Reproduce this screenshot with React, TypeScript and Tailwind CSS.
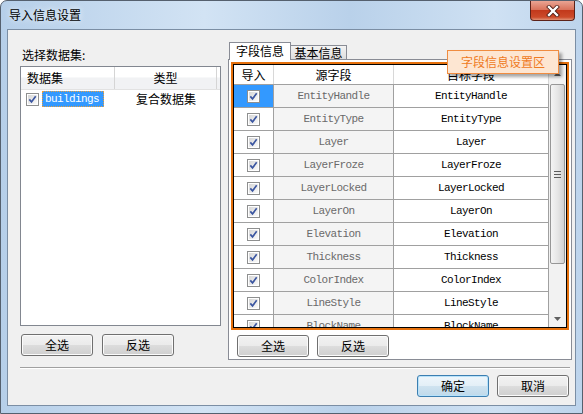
import React from 'react';

const cjk = "font-['Noto_Sans_CJK_SC','Microsoft_YaHei',sans-serif]";
const mono = "font-['Liberation_Mono','Noto_Sans_CJK_SC',monospace] text-[11px] tracking-[-0.6px]";

const fields = [
  'EntityHandle',
  'EntityType',
  'Layer',
  'LayerFroze',
  'LayerLocked',
  'LayerOn',
  'Elevation',
  'Thickness',
  'ColorIndex',
  'LineStyle',
  'BlockName',
];

const CheckBox: React.FC = () => (
  <svg width="13" height="13" viewBox="0 0 13 13" className="shrink-0">
    <defs>
      <linearGradient id="cbfill" x1="0" y1="0" x2="1" y2="1">
        <stop offset="0" stopColor="#d6d6d6" />
        <stop offset="1" stopColor="#fbfbfb" />
      </linearGradient>
    </defs>
    <rect x="0.5" y="0.5" width="12" height="12" fill="#ffffff" stroke="#8e8f8f" />
    <rect x="2" y="2" width="9" height="9" fill="url(#cbfill)" />
    <path d="M3.3 6.4 L5.5 8.9 L9.7 3.3" fill="none" stroke="#3b56a1" strokeWidth="1.7" />
  </svg>
);

const Btn: React.FC<{ label: string; primary?: boolean }> = ({ label, primary }) => (
  <div
    className={`w-[72px] h-[22px] rounded-[3px] border flex items-center justify-center text-[12px] text-black ${cjk} ${
      primary
        ? 'border-[#3c7fb1] shadow-[inset_0_0_0_1px_#b8e2fa] bg-[linear-gradient(#eef6fb_0%,#e3eff7_50%,#cfe3f0_50%,#bfd9ea_100%)]'
        : 'border-[#707070] shadow-[inset_0_0_0_1px_#fbfbfb] bg-[linear-gradient(#f2f2f2_0%,#ebebeb_50%,#dddddd_50%,#cfcfcf_100%)]'
    }`}
  >
    {label}
  </div>
);

const App: React.FC = () => {
  return (
    <div className={`relative w-[583px] h-[414px] rounded-t-[7px] border border-[#55606e] bg-[linear-gradient(90deg,#b6cfe9_0%,#d2e3f4_35%,#b9d1ea_60%,#cfe1f3_85%,#bdd4ec_100%)] flex flex-col ${cjk}`}>
      {/* title bar */}
      <div className="h-[28px] flex items-start">
        <div className="pl-[8px] h-[28px] leading-[28px] text-[12px] text-black [text-shadow:0_0_6px_#ffffff]">导入信息设置</div>
        <div className="ml-auto mr-[7px] w-[45px] h-[20px] rounded-b-[4px] border border-t-0 border-[#5c2219] bg-[linear-gradient(#e9a493_0%,#d9735c_45%,#c2391c_50%,#cc4a2a_85%,#e09276_100%)] flex items-center justify-center">
          <svg width="14" height="12" viewBox="0 0 14 12">
            <path d="M3 2 L11 10 M11 2 L3 10" stroke="#4a1a12" strokeWidth="4" strokeLinecap="square" />
            <path d="M3 2 L11 10 M11 2 L3 10" stroke="#ffffff" strokeWidth="2.4" strokeLinecap="square" />
          </svg>
        </div>
      </div>

      {/* client area */}
      <div className="mx-[6px] h-[377px] border border-[#7b8ea4] bg-[#f0f0f0] pt-[12px] pl-[12px] pr-[3px] flex flex-col">
        <div className="h-[318px] flex gap-[7px]">
          {/* left column */}
          <div className="w-[201px] flex flex-col">
            <div className="mt-[4px] h-[18px] leading-[18px] text-[12px] text-black pl-[2px]">选择数据集:</div>
            <div className="mt-[2px] h-[260px] border border-[#828790] bg-white flex flex-col">
              <div className="h-[23px] flex border-b border-[#e2e2e2] bg-[linear-gradient(#ffffff_0%,#ffffff_45%,#f1f2f4_50%,#f1f2f4_100%)] text-[12px] text-black">
                <div className="w-[94px] border-r border-[#d5d5d5] pl-[6px] leading-[22px]">数据集</div>
                <div className="w-[102px] border-r border-[#d5d5d5] text-center leading-[22px]">类型</div>
                <div className="flex-1" />
              </div>
              <div className="mt-[1px] h-[16px] flex items-center text-[12px]">
                <div className="w-[94px] flex items-center pl-[5px]">
                  <CheckBox />
                  <div className={`ml-[3px] w-[62px] h-[16px] bg-[#3399ff] border border-dotted border-[#e8a040] text-white leading-[14px] pl-[2px] ${mono}`}>
                    buildings
                  </div>
                </div>
                <div className="w-[102px] text-center text-black">复合数据集</div>
              </div>
            </div>
            <div className="mt-[8px] ml-[1px] flex gap-[9px]">
              <Btn label="全选" />
              <Btn label="反选" />
            </div>
          </div>

          {/* right column */}
          <div className="w-[344px] flex flex-col">
            <div className="relative z-10 h-[18px] flex items-start text-[12px] text-black">
              <div className="ml-[1px] w-[62px] h-[18px] border border-b-0 border-[#898c95] bg-white text-center leading-[16px]">字段信息</div>
              <div className="mt-[3px] w-[56px] h-[14px] border border-l-0 border-b-0 border-[#898c95] bg-[linear-gradient(#f3f3f3,#dedede)] text-center leading-[14px]">基本信息</div>
            </div>
            <div className="-mt-[1px] h-[301px] border border-[#898c95] bg-white flex flex-col">
              <div className="ml-[2px] mt-[2px] w-[338px] h-[268px] border-2 border-[#e5700c]">
                <div className="w-full h-full border border-black flex">
                  {/* grid */}
                  <div className="w-[315px] flex flex-col overflow-hidden">
                    <div className="h-[20px] shrink-0 flex border-b border-[#a0a0a0] bg-white text-[12px] text-black">
                      <div className="w-[40px] border-r border-[#d8d8d8] text-center leading-[19px]">导入</div>
                      <div className="w-[120px] border-r border-[#d8d8d8] text-center leading-[19px]">源字段</div>
                      <div className="w-[155px] border-r border-[#d8d8d8] text-center leading-[19px]">目标字段</div>
                    </div>
                    {fields.map((f, i) => (
                      <div key={f} className="h-[23px] shrink-0 flex border-b border-[#a0a0a0]">
                        <div className={`w-[40px] border-r border-[#a0a0a0] flex items-center justify-center ${i === 0 ? 'bg-[#3399ff]' : 'bg-white'}`}>
                          <CheckBox />
                        </div>
                        <div className={`w-[120px] border-r border-[#a0a0a0] bg-[#f4f4f4] text-[#6a6a6a] flex items-center justify-center ${mono}`}>
                          {f}
                        </div>
                        <div className={`w-[155px] border-r border-[#a0a0a0] bg-white text-black flex items-center justify-center ${mono}`}>
                          {f}
                        </div>
                      </div>
                    ))}
                  </div>
                  {/* scrollbar */}
                  <div className="w-[17px] bg-[#f2f2f2] flex flex-col items-center">
                    <div className="h-[17px] flex items-center justify-center">
                      <svg width="7" height="4" viewBox="0 0 7 4">
                        <path d="M0 4 L3.5 0 L7 4 Z" fill="#606060" />
                      </svg>
                    </div>
                    <div className="mt-[2px] w-[15px] h-[180px] rounded-[2px] border border-[#979797] bg-[linear-gradient(90deg,#f4f4f4,#e6e6e6_50%,#d2d2d2)] flex flex-col items-center justify-center gap-[2px]">
                      <div className="w-[7px] h-[1px] bg-[#5c5c5c]" />
                      <div className="w-[7px] h-[1px] bg-[#5c5c5c]" />
                      <div className="w-[7px] h-[1px] bg-[#5c5c5c]" />
                    </div>
                    <div className="flex-1" />
                    <div className="h-[17px] flex items-center justify-center">
                      <svg width="7" height="4" viewBox="0 0 7 4">
                        <path d="M0 0 L7 0 L3.5 4 Z" fill="#606060" />
                      </svg>
                    </div>
                  </div>
                </div>
              </div>
              <div className="mt-[5px] ml-[8px] flex gap-[8px]">
                <Btn label="全选" />
                <Btn label="反选" />
              </div>
            </div>
          </div>
        </div>

        <div className="mt-[7px] w-[550px] border-t border-[#a0a0a0] border-b border-b-white" />

        <div className="mt-[6px] pr-[3px] flex justify-end gap-[8px]">
          <Btn label="确定" primary />
          <Btn label="取消" />
        </div>
      </div>

      {/* annotation tooltip */}
      <div className="absolute left-[446px] top-[49px] w-[112px] h-[24px] border border-[#f08c40] bg-[#fde6d2] shadow-[3px_3px_3px_rgba(0,0,0,0.35)] flex items-center justify-center text-[12px] text-[#ef7a22]">
        字段信息设置区
      </div>
    </div>
  );
};

export default App;
